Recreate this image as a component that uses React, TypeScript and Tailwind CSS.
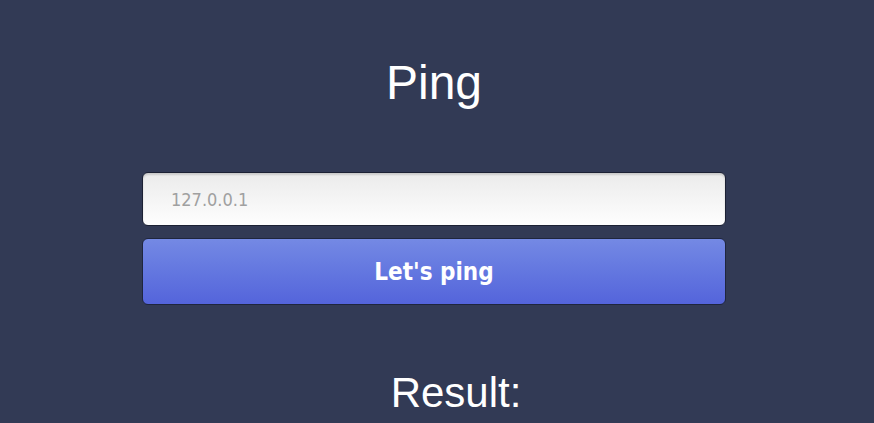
import React, { useState } from 'react';

const App: React.FC = () => {
  const [host, setHost] = useState('');

  return (
    <div className="min-h-[423px] w-full bg-[#323a55] font-['Liberation_Sans',Arial,sans-serif] text-white">
      <div className="w-[868px] pt-[59px]">
        <h1 className="text-center text-[48px] leading-none font-normal">Ping</h1>

        <form
          className="mx-auto mt-[65px] flex w-[584px] flex-col gap-[12px]"
          onSubmit={(e) => e.preventDefault()}
        >
          <input
            type="text"
            value={host}
            onChange={(e) => setHost(e.target.value)}
            placeholder="127.0.0.1"
            className="h-[54px] w-full rounded-[6px] border border-[#1c2134] bg-gradient-to-b from-[#ebebeb] to-[#fefefe] px-[28px] font-['DejaVu_Sans_Condensed','DejaVu_Sans',sans-serif] text-[18px] text-[#555] shadow-[inset_0_2px_2px_rgba(0,0,0,0.14)] outline-none placeholder:text-[#a0a0a0]"
          />
          <button
            type="submit"
            className="flex h-[67px] w-full items-center justify-center rounded-[6px] border border-[#1f263e] bg-gradient-to-b from-[#7489e4] to-[#5464db] font-['DejaVu_Sans_Condensed','DejaVu_Sans',sans-serif] text-[24px] font-bold text-white"
          >
            Let's ping
          </button>
        </form>

        <h2 className="mt-[67px] pl-[44px] text-center text-[42px] leading-none font-normal">Result:</h2>
      </div>
    </div>
  );
};

export default App;
